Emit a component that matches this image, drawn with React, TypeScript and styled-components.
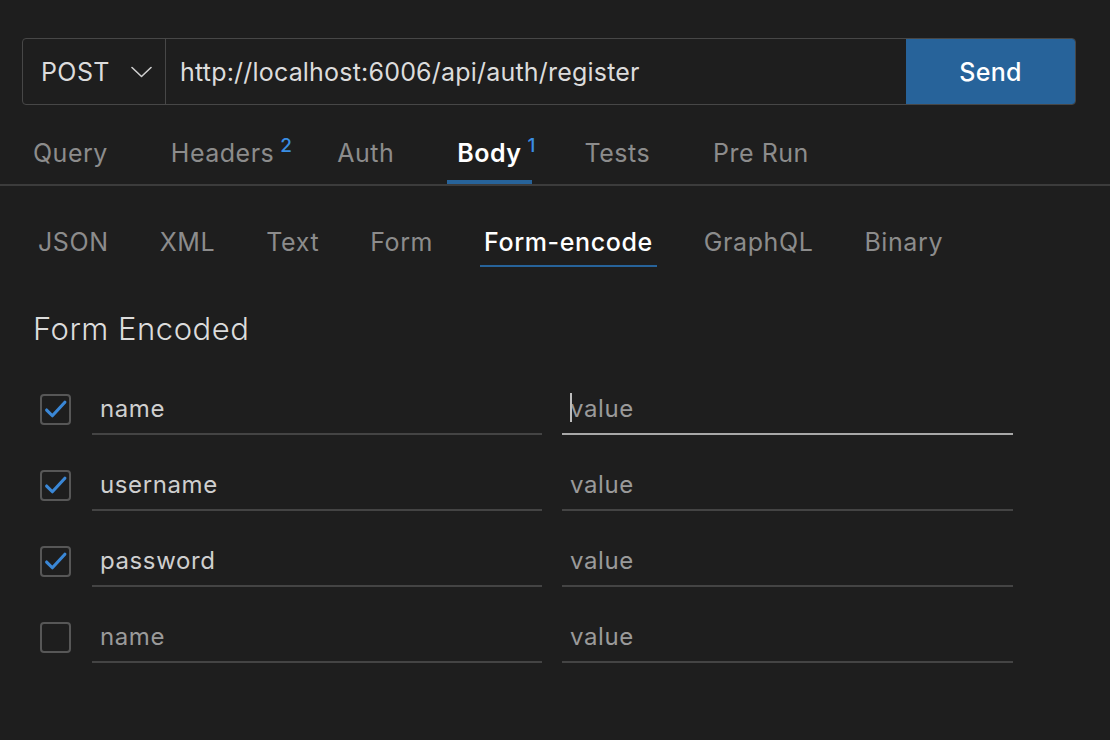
import React from 'react';
import styled, { createGlobalStyle } from 'styled-components';

const GlobalStyle = createGlobalStyle`
  html, body {
    margin: 0;
    padding: 0;
    background: #1e1e1e;
  }
  body {
    font-family: Inter, "Noto Sans", sans-serif;
    color: #dcdcdc;
  }
`;

const Page = styled.div`
  width: 1110px;
  height: 740px;
  background: #1e1e1e;
  padding-top: 38px;
  box-sizing: border-box;
  overflow: hidden;
`;

const UrlBar = styled.div`
  display: flex;
  height: 67px;
  margin: 0 34px 0 22px;
  border: 1px solid #474747;
  border-radius: 4px;
  box-sizing: border-box;
  overflow: hidden;
`;

const MethodSelect = styled.div`
  display: flex;
  align-items: center;
  justify-content: space-between;
  width: 143px;
  padding: 0 13px 0 18px;
  box-sizing: border-box;
  border-right: 1px solid #474747;
  font-size: 25px;
  letter-spacing: 0.4px;
  color: #dcdcdc;
`;

const UrlText = styled.div`
  flex: 1;
  display: flex;
  align-items: center;
  padding-left: 14px;
  font-size: 25px;
  letter-spacing: 0.2px;
  color: #dcdcdc;
`;

const SendButton = styled.div`
  width: 169px;
  display: flex;
  align-items: center;
  justify-content: center;
  background: #27639a;
  color: #ffffff;
  font-size: 25px;
  letter-spacing: 0.3px;
  font-weight: 500;
`;

const TabBar = styled.div`
  display: flex;
  align-items: flex-end;
  gap: 43px;
  height: 79px;
  padding-left: 23px;
  border-bottom: 2px solid #3c3c3c;
`;

const Tab = styled.div<{ $active?: boolean }>`
  padding: 0 10px 12px;
  border-bottom: 4px solid ${({ $active }) => ($active ? '#27639a' : 'transparent')};
  font-size: 25px;
  letter-spacing: 0.5px;
  line-height: 30px;
  font-weight: ${({ $active }) => ($active ? 600 : 400)};
  color: ${({ $active }) => ($active ? '#ffffff' : '#8c8c8c')};
`;

const TabLabel = styled.span`
  position: relative;
`;

const Count = styled.sup`
  position: absolute;
  left: calc(100% + 6px);
  top: -1px;
  font-size: 19px;
  line-height: 18px;
  font-weight: 500;
  color: #3a8ee3;
`;

const SubTabBar = styled.div`
  display: flex;
  gap: 43px;
  padding: 41px 0 0 34px;
`;

const SubTab = styled.div<{ $active?: boolean }>`
  padding: 0 4px 8px;
  border-bottom: 2px solid ${({ $active }) => ($active ? '#27639a' : 'transparent')};
  font-size: 25px;
  letter-spacing: 0.6px;
  line-height: 30px;
  font-weight: ${({ $active }) => ($active ? 500 : 400)};
  color: ${({ $active }) => ($active ? '#ffffff' : '#8c8c8c')};
`;

const Heading = styled.h2`
  margin: 44px 0 0 33px;
  font-size: 31px;
  letter-spacing: 0.5px;
  line-height: 36px;
  font-weight: 300;
  color: #dcdcdc;
`;

const Rows = styled.div`
  display: flex;
  flex-direction: column;
  gap: 24px;
  margin-top: 36px;
  padding-left: 40px;
`;

const Row = styled.div`
  display: flex;
  align-items: center;
`;

const CheckBox = styled.div`
  width: 31px;
  height: 31px;
  box-sizing: border-box;
  border: 2px solid #575757;
  border-radius: 4px;
  margin-right: 21px;
  display: flex;
  align-items: center;
  justify-content: center;
`;

const Field = styled.div<{ $width: number; $filled?: boolean; $focused?: boolean }>`
  position: relative;
  width: ${({ $width }) => $width}px;
  height: 52px;
  box-sizing: border-box;
  padding: 0 8px;
  display: flex;
  align-items: center;
  border-bottom: 2px solid ${({ $focused }) => ($focused ? '#a8a8a8' : '#444444')};
  font-size: 24px;
  letter-spacing: 0.6px;
  color: ${({ $filled }) => ($filled ? '#cfcfcf' : '#9a9a9a')};
  & + & {
    margin-left: 20px;
  }
`;

const Caret = styled.span`
  position: absolute;
  left: 8px;
  top: 10px;
  width: 2px;
  height: 29px;
  background: #bdbdbd;
`;

const Chevron = () => (
  <svg width="21" height="12" viewBox="0 0 21 12" fill="none">
    <path d="M1 1.5l9.5 9 9.5-9" stroke="#cfcfcf" strokeWidth="1.6" strokeLinecap="round" strokeLinejoin="round" />
  </svg>
);

const Check = () => (
  <svg width="25" height="25" viewBox="0 0 24 24" fill="none">
    <path d="M3.5 12.5l5.5 5.5L21 5" stroke="#3a87d6" strokeWidth="3" strokeLinecap="round" strokeLinejoin="round" />
  </svg>
);

const tabs = [
  { label: 'Query' },
  { label: 'Headers', count: 2 },
  { label: 'Auth' },
  { label: 'Body', count: 1, active: true },
  { label: 'Tests' },
  { label: 'Pre Run' },
];

const bodyTypes = ['JSON', 'XML', 'Text', 'Form', 'Form-encode', 'GraphQL', 'Binary'];

const params = [
  { key: 'name', checked: true, focused: true },
  { key: 'username', checked: true },
  { key: 'password', checked: true },
  { key: '', checked: false },
];

export default function App() {
  return (
    <Page>
      <GlobalStyle />
      <UrlBar>
        <MethodSelect>
          POST
          <Chevron />
        </MethodSelect>
        <UrlText>http://localhost:6006/api/auth/register</UrlText>
        <SendButton>Send</SendButton>
      </UrlBar>

      <TabBar>
        {tabs.map((t) => (
          <Tab key={t.label} $active={t.active}>
            <TabLabel>
              {t.label}
              {t.count !== undefined && <Count>{t.count}</Count>}
            </TabLabel>
          </Tab>
        ))}
      </TabBar>

      <SubTabBar>
        {bodyTypes.map((b) => (
          <SubTab key={b} $active={b === 'Form-encode'}>
            {b}
          </SubTab>
        ))}
      </SubTabBar>

      <Heading>Form Encoded</Heading>

      <Rows>
        {params.map((p, i) => (
          <Row key={i}>
            <CheckBox>{p.checked && <Check />}</CheckBox>
            <Field $width={450} $filled={!!p.key}>
              {p.key || 'name'}
            </Field>
            <Field $width={451} $focused={p.focused}>
              {p.focused && <Caret />}
              value
            </Field>
          </Row>
        ))}
      </Rows>
    </Page>
  );
}
